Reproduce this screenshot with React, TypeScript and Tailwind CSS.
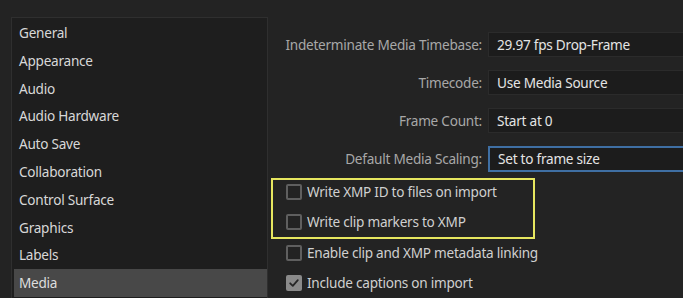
import React from "react";

const items = [
  "General",
  "Appearance",
  "Audio",
  "Audio Hardware",
  "Auto Save",
  "Collaboration",
  "Control Surface",
  "Graphics",
  "Labels",
  "Media",
];

const rows = [
  { label: "Indeterminate Media Timebase:", value: "29.97 fps Drop-Frame" },
  { label: "Timecode:", value: "Use Media Source" },
  { label: "Frame Count:", value: "Start at 0" },
  { label: "Default Media Scaling:", value: "Set to frame size", focus: true },
];

function Check({ label, checked }: { label: string; checked?: boolean }) {
  return (
    <div className="flex h-[24px] items-center">
      {checked ? (
        <div className="flex h-[16px] w-[16px] items-center justify-center rounded-[2px] bg-[#8a8a8a]">
          <svg width="12" height="12" viewBox="0 0 12 12">
            <path d="M2.2 6.3 L4.8 8.8 L9.8 3.2" fill="none" stroke="#262626" strokeWidth="1.8" strokeLinecap="round" strokeLinejoin="round" />
          </svg>
        </div>
      ) : (
        <div className="h-[16px] w-[16px] rounded-[2px] border-2 border-[#5f5f5f]" />
      )}
      <span className="ml-[5px] text-[#d0d0d0]">{label}</span>
    </div>
  );
}

export default function App() {
  return (
    <div
      className="flex h-[298px] w-[683px] overflow-hidden bg-[#232323] text-[13.6px] leading-none tracking-[-0.25px]"
      style={{ fontFamily: '"Noto Sans", sans-serif' }}
    >
      <div className="ml-[11px] mt-[17px] h-[300px] w-[257px] shrink-0 border border-[#2f2f2f] bg-[#1e1e1e] pt-[1px]">
        {items.map((it) => (
          <div
            key={it}
            className={
              "flex h-[27.8px] items-center pl-[5px] ml-[2px] " +
              (it === "Media" ? "bg-[#484848] text-[#dedede]" : "text-[#d8d8d8]")
            }
          >
            {it}
          </div>
        ))}
      </div>
      <div className="flex min-w-0 flex-1 flex-col pt-[32px]">
        <div className="flex flex-col gap-[13px]">
          {rows.map((r) => (
            <div key={r.label} className="flex h-[25px] items-center">
              <div className="w-[214px] shrink-0 text-right text-[#a8a8a8]">{r.label}</div>
              <div
                className={
                  "ml-[6px] flex w-[300px] shrink-0 items-center pl-[8px] text-[#e4e4e4] bg-[#1c1c1c] " +
                  (r.focus
                    ? "h-[26px] border-2 border-[#3f6fa3]"
                    : "h-[25px] border border-[#2b2b2b]")
                }
              >
                {r.value}
              </div>
            </div>
          ))}
        </div>
        <div className="ml-[3px] mt-[7px] flex w-[264px] flex-col gap-[6px] border-2 border-[#e6e65f] pb-[3px] pl-[13px]">
          <Check label="Write XMP ID to files on import" />
          <Check label="Write clip markers to XMP" />
        </div>
        <div className="mt-[2px] flex flex-col gap-[6px] pl-[18px]">
          <Check label="Enable clip and XMP metadata linking" />
          <Check label="Include captions on import" checked />
        </div>
      </div>
    </div>
  );
}
